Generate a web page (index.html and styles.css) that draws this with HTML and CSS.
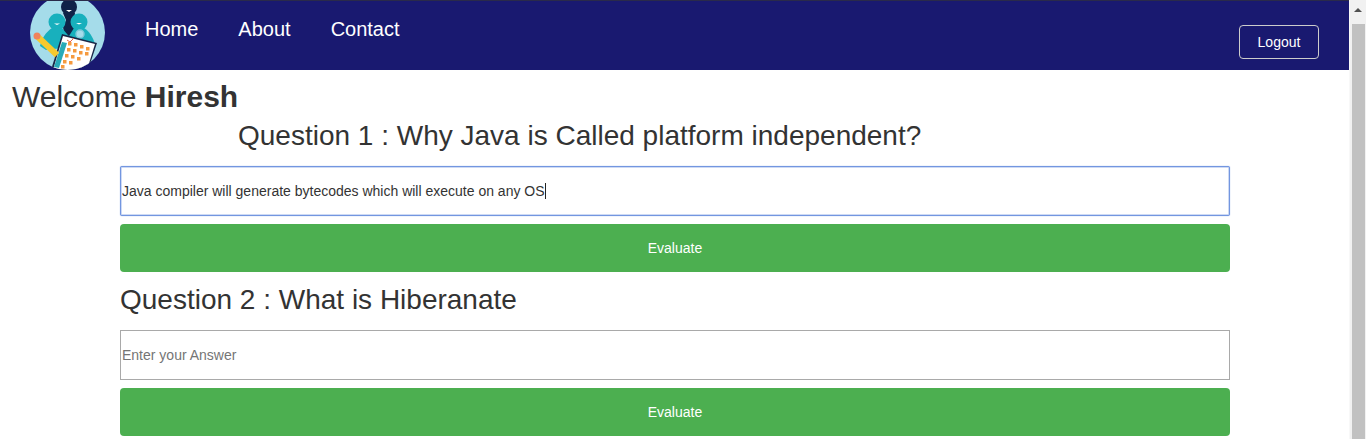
FILE: index.html
```html
<!DOCTYPE html>
<html lang="en">
<head>
    <meta charset="UTF-8">
    <meta name="viewport" content="width=device-width, initial-scale=1.0">
    <title>Online Exam</title>
    <link rel="stylesheet" href="styles.css">
</head>
<body>
    <div class="page">
        <div class="content">
            <nav class="navbar">
                <svg class="logo" viewBox="0 0 75 75" aria-label="Logo">
                    <defs>
                        <clipPath id="logoClip"><circle cx="37.5" cy="37.5" r="37.5"/></clipPath>
                    </defs>
                    <g clip-path="url(#logoClip)">
                        <rect width="75" height="75" fill="#a5dcea"/>
                        <!-- back person -->
                        <circle cx="39" cy="12" r="8" fill="#0f2248"/>
                        <path d="M33 18h12l-1 6 4 6-3 14H35l-2-12 3-7z" fill="#0f2248"/>
                        <path d="M36 15h6l-3 2z" fill="#fff"/>
                        <!-- left and right people -->
                        <circle cx="27" cy="27" r="8.500" fill="#18b0bd"/>
                        <path d="M22 33h10c3 3 5 7 9 10l-9 10-16 2-6-4c2-8 6-14 12-18z" fill="#18b0bd"/>
                        <path d="M24 28.500h6l-3 1.500z" fill="#fff"/>
                        <circle cx="49" cy="27" r="8.500" fill="#18b0bd"/>
                        <path d="M44 33h10c5 3 9 9 11 16H40l-1-8z" fill="#18b0bd"/>
                        <path d="M46 28h6l-3 1.500z" fill="#fff"/>
                        <circle cx="50" cy="39" r="4" fill="#a5dcea" stroke="#7fc8d8" stroke-width="1.500"/>
                        <!-- clipboard -->
                        <path d="M32 39l35 9-9 27H21z" fill="#1a2747"/>
                        <path d="M33 41l32 8-8 26H23z" fill="#fff"/>
                        <path d="M32 47l5 1-8 25-5-1z" fill="#27aab8"/>
                        <path d="M37 45l3 2 4-4" fill="none" stroke="#e8604c" stroke-width="1"/>
                        <g fill="#f59a3e">
                            <rect x="38" y="47" width="3.500" height="3.500"/><rect x="44" y="48" width="3.500" height="3.500"/>
                            <rect x="50" y="50" width="3.500" height="3.500"/><rect x="56" y="52" width="3.500" height="3.500"/>
                            <rect x="37" y="53" width="3.500" height="3.500"/><rect x="43" y="54" width="3.500" height="3.500"/>
                            <rect x="49" y="56" width="3.500" height="3.500"/><rect x="55" y="57" width="3.500" height="3.500"/>
                            <rect x="35" y="59" width="3.500" height="3.500"/><rect x="41" y="60" width="3.500" height="3.500"/>
                            <rect x="47" y="62" width="3.500" height="3.500"/><rect x="33" y="65" width="3.500" height="3.500"/>
                            <rect x="39" y="66" width="3.500" height="3.500"/><rect x="31" y="70" width="3.500" height="3.500"/>
                        </g>
                        <!-- pencil -->
                        <path d="M8 42l19 18" stroke="#f5c92e" stroke-width="6"/>
                        <circle cx="7" cy="41" r="3.500" fill="#f0825a"/>
                    </g>
                </svg>
                <ul class="nav-links">
                    <li><a href="#">Home</a></li>
                    <li><a href="#">About</a></li>
                    <li><a href="#">Contact</a></li>
                </ul>
                <a class="logout-btn" href="#">Logout</a>
            </nav>

            <h2 class="welcome">Welcome <b>Hiresh</b></h2>

            <div class="container">
                <h3 class="question question-first">Question 1 : Why Java is Called platform independent?</h3>
                <div class="answer-wrap">
                    <input class="answer answer-active" type="text" value="Java compiler will generate bytecodes which will execute on any OS">
                    <span class="caret"></span>
                </div>
                <button class="evaluate-btn" type="button">Evaluate</button>

                <h3 class="question">Question 2 : What is Hiberanate</h3>
                <div class="answer-wrap">
                    <input class="answer" type="text" placeholder="Enter your Answer">
                </div>
                <button class="evaluate-btn" type="button">Evaluate</button>
            </div>
        </div>

        <div class="scrollbar">
            <svg class="scroll-arrow" viewBox="0 0 8 4"><path d="M0 4L4 0l4 4z" fill="#505050"/></svg>
            <div class="scroll-thumb"></div>
        </div>
    </div>
</body>
</html>
```

FILE: styles.css
```css
* {
    box-sizing: border-box;
}

html, body {
    height: 100%;
    margin: 0;
    overflow: hidden;
}

body {
    font-family: "Liberation Sans", Arial, sans-serif;
    font-size: 14px;
    color: #333;
    background-color: #fff;
}

.page {
    display: flex;
    height: 439px;
}

.content {
    flex: 1;
    min-width: 0;
    overflow: hidden;
}

.navbar {
    display: flex;
    height: 70px;
    padding-left: 30px;
    padding-right: 30px;
    background-color: #191970;
    border-top: 1px solid #2a2a4a;
    overflow: hidden;
}

.logo {
    width: 75px;
    height: 75px;
    margin-top: -6px;
    flex-shrink: 0;
}

.nav-links {
    display: flex;
    gap: 40px;
    list-style: none;
    margin: 0;
    padding: 17px 0 0 40px;
}

.nav-links a {
    color: #fff;
    font-size: 20px;
    text-decoration: none;
}

.logout-btn {
    display: flex;
    align-items: center;
    justify-content: center;
    width: 80px;
    height: 34px;
    margin-top: 24px;
    margin-left: auto;
    color: #fff;
    text-decoration: none;
    border: 1px solid #ccc;
    border-radius: 4px;
}

.welcome {
    margin: 10px 0 0 12px;
    font-size: 30px;
    font-weight: normal;
    line-height: 33px;
}

.container {
    margin: 0 119px 0 120px;
}

.question {
    margin: 0;
    font-size: 28px;
    font-weight: normal;
    line-height: 31px;
}

.question-first {
    margin-top: 7px;
    padding-left: 118px;
}

.answer-wrap {
    position: relative;
    margin-top: 15px;
}

.answer {
    display: block;
    width: 100%;
    height: 50px;
    padding: 0 1px;
    font-family: inherit;
    font-size: 14px;
    color: #333;
    border: 1px solid #a9a9a9;
    border-radius: 0;
    outline: none;
}

.answer::placeholder {
    color: #757575;
}

.answer-active {
    border-color: #7396e0;
    box-shadow: inset 0 0 0 1px rgba(115, 150, 224, 0.35), 0 0 1px #7396e0;
    border-radius: 2px;
}

.caret {
    position: absolute;
    left: 425px;
    top: 17px;
    width: 1px;
    height: 16px;
    background-color: #222;
}

.evaluate-btn {
    display: block;
    width: 100%;
    height: 48px;
    margin: 8px 0 12px;
    font-family: inherit;
    font-size: 14px;
    color: #fff;
    background-color: #4caf50;
    border: none;
    border-radius: 4px;
}

.scrollbar {
    display: flex;
    flex-direction: column;
    align-items: center;
    width: 17px;
    flex-shrink: 0;
    background-color: #f1f1f1;
    border-left: 1px solid #f8f8f8;
}

.scroll-arrow {
    display: block;
    width: 8px;
    height: 4px;
    flex-shrink: 0;
    margin-top: 8px;
}

.scroll-thumb {
    width: 13px;
    height: 415px;
    flex-shrink: 0;
    margin-top: 12px;
    background-color: #c1c1c1;
}
```
